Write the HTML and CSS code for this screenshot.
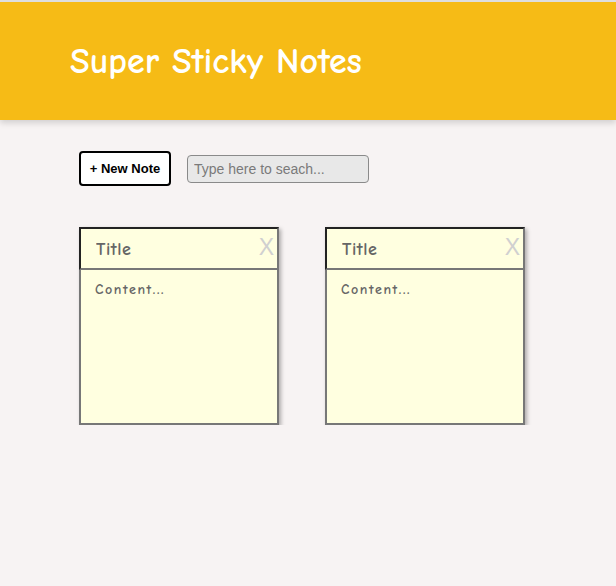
FILE: index.html
```html
<!DOCTYPE html>
<html>
<head>
<meta charset="utf-8">
<link rel="stylesheet" href="styles.css">
</head>
<body>
<header class="app-header">
  <h1 class="app-title">Super Sticky Notes</h1>
</header>
<div class="controls">
  <button class="add-button">+ New Note</button>
  <input class="search" type="text" placeholder="Type here to seach...">
</div>
<ul class="notes-list">
  <li class="note">
    <div class="note-head">
      <input class="note-title" type="text" placeholder="Title">
      <span class="note-delete">X</span>
    </div>
    <textarea class="note-content" placeholder="Content..."></textarea>
  </li>
  <li class="note">
    <div class="note-head">
      <input class="note-title" type="text" placeholder="Title">
      <span class="note-delete">X</span>
    </div>
    <textarea class="note-content" placeholder="Content..."></textarea>
  </li>
</ul>
</body>
</html>
```
FILE: styles.css
```css
html, body {
  margin: 0;
  padding: 0;
}
body {
  background: #f7f3f3;
  font-family: "Comic Sans MS", "Comic Neue", "Open Sans", sans-serif;
  border-top: 2px solid #dedede;
}
.app-header {
  background: #f6bb16;
  height: 118px;
  box-shadow: 0 3px 6px rgba(0,0,0,0.15);
  display: flex;
  align-items: center;
  padding-left: 70px;
  box-sizing: border-box;
}
.app-title {
  margin: 0;
  color: #fff;
  font-size: 36px;
  font-weight: bold;
}
.controls {
  display: flex;
  align-items: center;
  gap: 16px;
  padding: 31px 0 0 79px;
}
.add-button {
  height: 35px;
  width: 92px;
  background: #fff;
  border: 2px solid #000;
  border-radius: 4px;
  font-family: "Liberation Sans", Arial, sans-serif;
  font-weight: bold;
  font-size: 13px;
  color: #000;
  padding: 0;
}
.search {
  width: 182px;
  height: 28px;
  box-sizing: border-box;
  background: #e8e8e8;
  border: 1px solid #8a8a8a;
  border-radius: 4px;
  padding: 0 6px;
  font-family: "Liberation Sans", Arial, sans-serif;
  font-size: 14px;
  color: #333;
}
.search::placeholder {
  color: #7a7a7a;
}
.notes-list {
  list-style: none;
  margin: 0;
  padding: 41px 0 0 79px;
  display: flex;
  gap: 46px;
}
.note {
  width: 200px;
  height: 198px;
  display: flex;
  flex-direction: column;
  background: #ffffe0;
  box-shadow: 2px 2px 4px rgba(0,0,0,0.3);
}
.note-head {
  position: relative;
  height: 43px;
  box-sizing: border-box;
  border: 2px solid;
  border-color: #222 #777 #777 #222;
  background: #ffffe0;
  display: flex;
  align-items: center;
}
.note-title {
  border: none;
  background: transparent;
  width: 150px;
  padding: 1px 0 0 15px;
  font-family: inherit;
  font-weight: bold;
  font-size: 18px;
  letter-spacing: 0.5px;
  color: #666;
  outline: none;
}
.note-title::placeholder {
  color: #666;
  font-weight: bold;
}
.note-delete {
  position: absolute;
  right: 3px;
  top: 7px;
  color: #d0d0d0;
  font-family: "Liberation Sans", Arial, sans-serif;
  font-size: 23px;
  line-height: 1;
}
.note-content {
  flex: 1;
  border: 2px solid #777;
  border-top: none;
  background: #ffffe0;
  resize: none;
  padding: 11px 14px;
  font-family: inherit;
  font-weight: bold;
  font-size: 14px;
  color: #666;
  outline: none;
  letter-spacing: 1.6px;
}
.note-content::placeholder {
  color: #666;
  font-weight: bold;
}
```
